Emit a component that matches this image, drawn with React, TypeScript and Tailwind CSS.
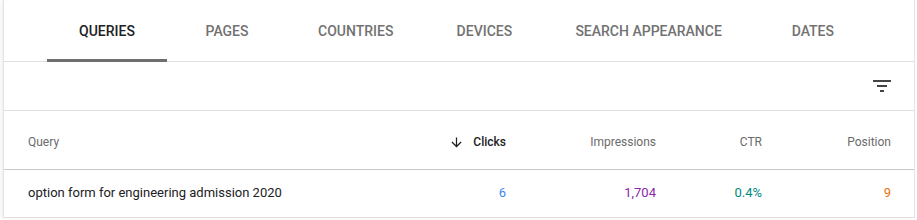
import { useState } from "react";

type Row = {
  query: string;
  clicks: number;
  impressions: string;
  ctr: string;
  position: number;
};

const tabs = ["Queries", "Pages", "Countries", "Devices", "Search appearance", "Dates"];

const rows: Row[] = [
  { query: "option form for engineering admission 2020", clicks: 6, impressions: "1,704", ctr: "0.4%", position: 9 },
];

function FilterIcon() {
  return (
    <svg width="24" height="24" viewBox="0 0 24 24" fill="#444">
      <path d="M3 6h18v2H3zM7 11h10v2H7zM10 16h4v2h-4z" />
    </svg>
  );
}

function ArrowDown() {
  return (
    <svg width="15" height="15" viewBox="0 0 24 24" fill="#202124">
      <path d="M20 12l-1.41-1.41L13 16.17V4h-2v12.17l-5.58-5.59L4 12l8 8 8-8z" />
    </svg>
  );
}

export default function App() {
  const [active, setActive] = useState(0);

  return (
    <main className="h-[220px] w-[917px] overflow-hidden bg-white font-['Roboto',sans-serif]">
      <div className="ml-[3px] w-[912px] border-x border-[#e3e3e3] bg-white shadow-[-2px_0_3px_rgba(0,0,0,0.06)]">
        <div className="flex h-[62px] border-b border-[#e0e0e0] pl-[43px]">
          {tabs.map((tab, i) => (
            <button
              key={tab}
              onClick={() => setActive(i)}
              className={`relative flex min-w-[120px] items-center justify-center px-[31px] pt-px text-[14px] font-medium uppercase ${
                i === active ? "text-[#202124]" : "text-[#727272]"
              }`}
            >
              {tab}
              {i === active && <span className="absolute -bottom-px left-0 right-0 h-[3px] bg-[#6e6e6e]" />}
            </button>
          ))}
        </div>

        <div className="flex h-[49px] items-center justify-end border-b border-[#e0e0e0] pr-[20px]">
          <FilterIcon />
        </div>

        <div className="flex h-[59px] items-center border-b border-[#c8c8c8] pt-[4px] text-[12px] text-[#6b6b6b]">
          <div className="flex-1 pl-6">Query</div>
          <div className="flex w-[120px] items-center justify-end gap-[9px] pr-6 font-medium text-[#202124]">
            <ArrowDown />
            Clicks
          </div>
          <div className="w-[150px] pr-6 text-right">Impressions</div>
          <div className="w-[106px] pr-6 text-right">CTR</div>
          <div className="w-[128px] pr-[23px] text-right">Position</div>
        </div>

        {rows.map((row) => (
          <div key={row.query} className="flex h-[48px] items-center border-b border-[#e0e0e0] pb-[2px] text-[13px]">
            <div className="flex-1 pl-6 text-[#202124]">{row.query}</div>
            <div className="w-[120px] pr-6 text-right text-[#4285f4]">{row.clicks}</div>
            <div className="w-[150px] pr-6 text-right text-[#8e24aa]">{row.impressions}</div>
            <div className="w-[106px] pr-6 text-right text-[#00897b]">{row.ctr}</div>
            <div className="w-[128px] pr-[23px] text-right text-[#e8710a]">{row.position}</div>
          </div>
        ))}
      </div>
    </main>
  );
}
